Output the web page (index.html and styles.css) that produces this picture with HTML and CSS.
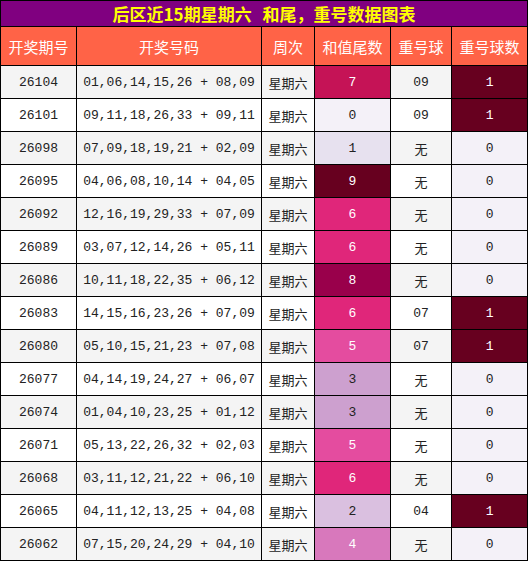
FILE: index.html
```html
<!DOCTYPE html>
<html lang="zh">
<head>
  <meta charset="UTF-8" />
  <meta name="viewport" content="width=device-width, initial-scale=1.0"/>
  <title>后区近15期星期六 和尾，重号数据图表</title>
  <link rel="stylesheet" href="styles.css">
</head>
<body>
  <table class="chart">
    <colgroup>
      <col class="c-issue">
      <col class="c-nums">
      <col class="c-week">
      <col class="c-tail">
      <col class="c-repeat">
      <col class="c-count">
    </colgroup>
    <thead>
      <tr class="title-row">
        <th colspan="6">后区近15期星期六 和尾，重号数据图表</th>
      </tr>
      <tr class="head-row">
        <th>开奖期号</th>
        <th>开奖号码</th>
        <th>周次</th>
        <th>和值尾数</th>
        <th>重号球</th>
        <th>重号球数</th>
      </tr>
    </thead>
    <tbody>
      <tr><td class="mono">26104</td><td class="mono">01,06,14,15,26 + 08,09</td><td class="cjk">星期六</td><td class="mono h7">7</td><td class="mono">09</td><td class="mono h9">1</td></tr>
      <tr><td class="mono">26101</td><td class="mono">09,11,18,26,33 + 09,11</td><td class="cjk">星期六</td><td class="mono h0">0</td><td class="mono">09</td><td class="mono h9">1</td></tr>
      <tr><td class="mono">26098</td><td class="mono">07,09,18,19,21 + 02,09</td><td class="cjk">星期六</td><td class="mono h1">1</td><td class="cjk">无</td><td class="mono h0">0</td></tr>
      <tr><td class="mono">26095</td><td class="mono">04,06,08,10,14 + 04,05</td><td class="cjk">星期六</td><td class="mono h9">9</td><td class="cjk">无</td><td class="mono h0">0</td></tr>
      <tr><td class="mono">26092</td><td class="mono">12,16,19,29,33 + 07,09</td><td class="cjk">星期六</td><td class="mono h6">6</td><td class="cjk">无</td><td class="mono h0">0</td></tr>
      <tr><td class="mono">26089</td><td class="mono">03,07,12,14,26 + 05,11</td><td class="cjk">星期六</td><td class="mono h6">6</td><td class="cjk">无</td><td class="mono h0">0</td></tr>
      <tr><td class="mono">26086</td><td class="mono">10,11,18,22,35 + 06,12</td><td class="cjk">星期六</td><td class="mono h8">8</td><td class="cjk">无</td><td class="mono h0">0</td></tr>
      <tr><td class="mono">26083</td><td class="mono">14,15,16,23,26 + 07,09</td><td class="cjk">星期六</td><td class="mono h6">6</td><td class="mono">07</td><td class="mono h9">1</td></tr>
      <tr><td class="mono">26080</td><td class="mono">05,10,15,21,23 + 07,08</td><td class="cjk">星期六</td><td class="mono h5">5</td><td class="mono">07</td><td class="mono h9">1</td></tr>
      <tr><td class="mono">26077</td><td class="mono">04,14,19,24,27 + 06,07</td><td class="cjk">星期六</td><td class="mono h3">3</td><td class="cjk">无</td><td class="mono h0">0</td></tr>
      <tr><td class="mono">26074</td><td class="mono">01,04,10,23,25 + 01,12</td><td class="cjk">星期六</td><td class="mono h3">3</td><td class="cjk">无</td><td class="mono h0">0</td></tr>
      <tr><td class="mono">26071</td><td class="mono">05,13,22,26,32 + 02,03</td><td class="cjk">星期六</td><td class="mono h5">5</td><td class="cjk">无</td><td class="mono h0">0</td></tr>
      <tr><td class="mono">26068</td><td class="mono">03,11,12,21,22 + 06,10</td><td class="cjk">星期六</td><td class="mono h6">6</td><td class="cjk">无</td><td class="mono h0">0</td></tr>
      <tr><td class="mono">26065</td><td class="mono">04,11,12,13,25 + 04,08</td><td class="cjk">星期六</td><td class="mono h2">2</td><td class="mono">04</td><td class="mono h9">1</td></tr>
      <tr><td class="mono">26062</td><td class="mono">07,15,20,24,29 + 04,10</td><td class="cjk">星期六</td><td class="mono h4">4</td><td class="cjk">无</td><td class="mono h0">0</td></tr>
    </tbody>
  </table>
</body>
</html>
```

FILE: styles.css
```css
body {
  margin: 0;
  background: #ffffff;
  font-family: "Noto Sans CJK SC", "Noto Sans", sans-serif;
}

.chart {
  width: 528px;
  border-collapse: collapse;
  table-layout: fixed;
}

.c-issue { width: 76px; }
.c-nums { width: 185px; }
.c-week { width: 53px; }
.c-tail { width: 76px; }
.c-repeat { width: 61px; }
.c-count { width: 76px; }

.chart th,
.chart td {
  border: 1px solid #000000;
  padding: 0;
  text-align: center;
  white-space: nowrap;
  overflow: hidden;
}

.title-row th {
  height: 25px;
  background: #800080;
  color: #ffff00;
  font-size: 17px;
  font-weight: bold;
  line-height: 25px;
  word-spacing: 7px;
}

.head-row th {
  height: 38px;
  background: #ff6347;
  color: #ffffff;
  font-size: 15px;
  font-weight: normal;
}

.chart td {
  height: 32px;
  color: #222222;
}

.chart tbody tr:nth-child(odd) td {
  background: #f4f4f4;
}

.chart tbody tr:nth-child(even) td {
  background: #ffffff;
}

.mono {
  font-family: "Liberation Mono", "DejaVu Sans Mono", monospace;
  font-size: 13px;
}

.cjk {
  font-size: 13px;
  padding-top: 2px;
}

/* heat colours for tail / count */
.chart tbody tr td.h0 { background: #f4f1f8; color: #222222; }
.chart tbody tr td.h1 { background: #e7e1ef; color: #222222; }
.chart tbody tr td.h2 { background: #dac0e0; color: #222222; }
.chart tbody tr td.h3 { background: #cda0cf; color: #222222; }
.chart tbody tr td.h4 { background: #d878bc; color: #ffffff; }
.chart tbody tr td.h5 { background: #e44c9f; color: #ffffff; }
.chart tbody tr td.h6 { background: #e0267a; color: #ffffff; }
.chart tbody tr td.h7 { background: #c51356; color: #ffffff; }
.chart tbody tr td.h8 { background: #99004b; color: #ffffff; }
.chart tbody tr td.h9 { background: #67001f; color: #ffffff; }
```
